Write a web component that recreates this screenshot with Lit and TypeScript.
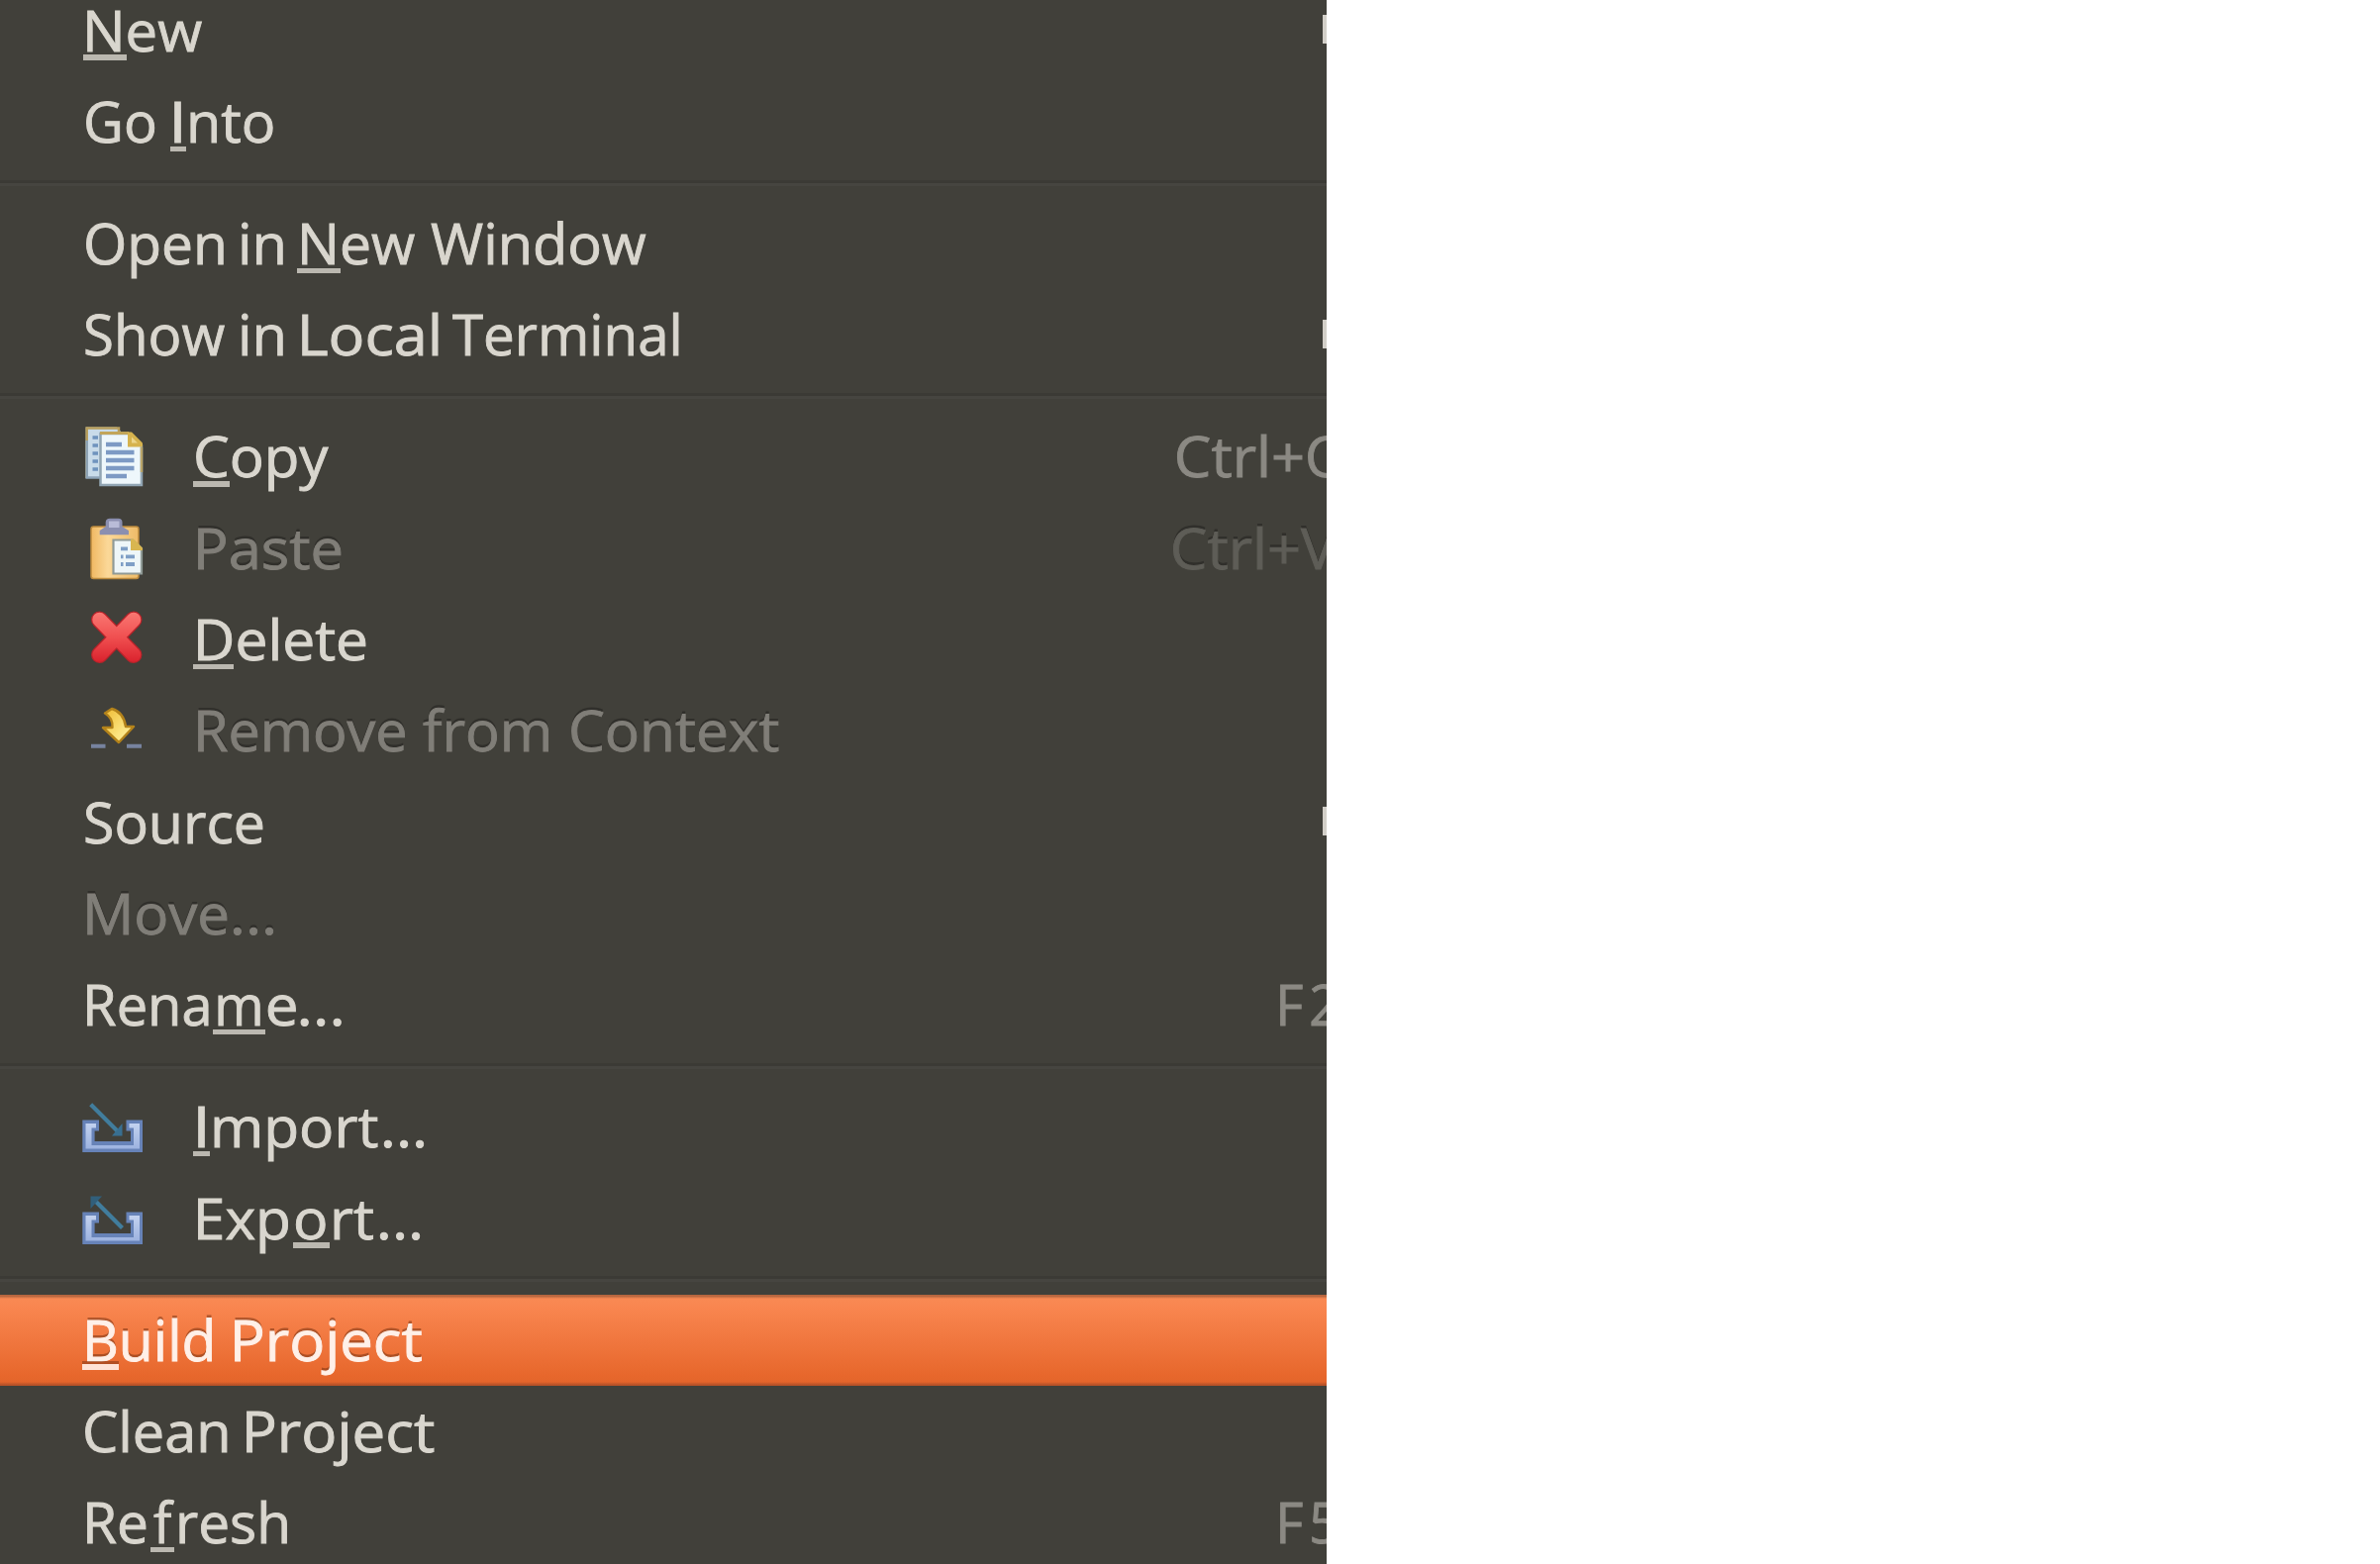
import { LitElement, html, css, svg, nothing, TemplateResult } from "lit";
import { customElement, property } from "lit/decorators.js";
import { styleMap } from "lit/directives/style-map.js";

/** A run of text with the left and right edges of its ink, in menu pixels. */
type Run = [text: string, left: number, right: number];

interface Item {
  label: Run[];
  mnemonic?: [number, number];
  icon?: string;
  accel?: Run[];
  submenu?: boolean;
  disabled?: boolean;
  active?: boolean;
}

const FONT = '"Open Sans", "Noto Sans", sans-serif';
const FONT_SIZE = 57;

const GROUPS: Item[][] = [
  [
    { label: [["New", 87.5, 203.5]], mnemonic: [83.5, 128], submenu: true },
    { label: [["Go ", 86.5, 156], ["I", 176, 183], ["nto", 192, 276]], mnemonic: [172, 188] },
  ],
  [
    {
      label: [["Open ", 86.5, 225.5], ["in ", 244, 286], ["New ", 304.5, 418.5], ["Window", 434.5, 652]],
      mnemonic: [300, 344],
    },
    {
      label: [["Show ", 86, 227], ["in ", 244, 286], ["Local ", 304.5, 442], ["Terminal", 457, 685.5]],
      submenu: true,
    },
  ],
  [
    { label: [["Copy", 198, 332]], mnemonic: [195, 232], icon: "copy", accel: [["Ctrl+", 1188.5, 1315], ["C", 1321, 1353]] },
    { label: [["Paste", 200, 345]], icon: "paste", disabled: true, accel: [["Ctrl+", 1184.5, 1311], ["V", 1314, 1349]] },
    { label: [["Delete", 200, 370]], mnemonic: [195, 236], icon: "delete" },
    { label: [["Remove ", 200, 409.5], ["from ", 427, 554.5], ["Context", 576.5, 786.5]], icon: "remove", disabled: true },
    { label: [["Source", 86, 266]], submenu: true },
    { label: [["Move", 88, 230], ["...", 235.5, 275.5]], disabled: true },
    { label: [["Rena", 88, 211], ["m", 220, 263], ["e", 270.5, 299], ["...", 303.5, 344]], mnemonic: [215, 268], accel: [["F", 1293, 1316], ["2", 1324, 1350]] },
  ],
  [
    { label: [["I", 200, 207], ["mport", 216, 382], ["...", 388, 428]], mnemonic: [195, 212], icon: "import" },
    { label: [["Exp", 200, 291], ["o", 298.5, 328.5], ["rt", 337, 377.5], ["...", 384, 424]], mnemonic: [295.5, 332.5], icon: "export" },
  ],
  [
    { label: [["Build ", 88, 213.5], ["Project", 236.5, 426]], mnemonic: [83, 120], active: true },
    { label: [["Clean ", 86, 229.5], ["Project", 248.5, 438.5]] },
    { label: [["Re", 88, 148], ["f", 154.5, 175.5], ["resh", 181, 290]], mnemonic: [151.5, 176], accel: [["F", 1293, 1316], ["5", 1325, 1350]] },
  ],
];

const TRAY = svg`
  <path d="M3.3 39.4H20V50.5H15.6V61H52V50.5H47.5V39.4H64V72H3.3Z" fill="#6783b8"/>
  <path d="M6.5 43H17V47.500H12.500V65H55V47.500H50.500V43H61V68.500H6.500Z" fill="url(#tray)"/>`;

const ICONS: Record<string, TemplateResult> = {
  copy: svg`
    <path d="M6.7 16.500H38L42 21V68H6.7Z" fill="#c9dbe9"/>
    <path d="M7.7 68V17.500H40V22" fill="none" stroke="#b79e5c" stroke-width="2.500"/>
    <path d="M7.700 30V67.500H21" fill="none" stroke="#8ea4b8" stroke-width="2.500"/>
    <path d="M13.500 27H19M13.500 35H19M13.500 43H19M13.500 51H19M13.500 59H19" stroke="#6f93bd" stroke-width="3.500"/>
    <path d="M21.500 23H51L63 35V75H21.500Z" fill="#eef7fb" stroke="#91a5b3" stroke-width="2.500"/>
    <path d="M21 22.500H50" stroke="#c2a559" stroke-width="3"/>
    <path d="M63 37V62" stroke="#b9a569" stroke-width="2.500"/>
    <path d="M49 21.500H53L64 32.500V36.500H49Z" fill="#d6b34e"/>
    <path d="M53 26.500V32.500H59Z" fill="#ecd68c"/>
    <path d="M27 34H43M27 42H55.500M27 50H55.500M27 58H55.500M27 66H48" stroke="#7d9ac4" stroke-width="4.500"/>`,
  paste: svg`
    <rect x="12" y="24" width="48" height="52.500" rx="2.500" fill="url(#board)" stroke="#bd8b3e" stroke-width="1.500"/>
    <path d="M26.700 19.500Q27 15.800 31 15.800H39.500Q43.300 15.800 43.500 19.500V24L50 28V32.300H20.700V28L26.700 24Z" fill="#8b8fb0"/>
    <path d="M30 18.500H40.500V25H30Z" fill="#b9bcd8"/>
    <path d="M34.500 37.500H54L63 46V71.500H34.500Z" fill="#eef6f8" stroke="#8f9a96" stroke-width="2.200"/>
    <path d="M52 36.500H55L64 45.500V48H52Z" fill="#d9b650"/>
    <path d="M42 46.300H49M42 54.300H44.500M47 54.300H56M42 62H44.500M47 62H56" stroke="#7f9fc6" stroke-width="3.800"/>`,
  delete: svg`
    <path d="M20.500 26L55 61.500M55 26L20.500 61.500" fill="none" stroke="#b8232a" stroke-width="17" stroke-linecap="round"/>
    <path d="M20.500 26L55 61.500M55 26L20.500 61.500" fill="none" stroke="url(#cross)" stroke-width="14.500" stroke-linecap="round"/>`,
  remove: svg`
    <path d="M12 61.700H26.500M48 61.700H63" stroke="#77839f" stroke-width="4"/>
    <path d="M26 28.500L33 24C40 26 45.500 32.500 47 42H55L40 58L24 43H33.500C34 36.500 31 31.500 26 28.500Z" fill="url(#gold)" stroke="#b4831a" stroke-width="2.500" stroke-linejoin="round"/>`,
  import: svg`${TRAY}
    <path d="M11.700 23.700L40 52" stroke="#417d9d" stroke-width="4.200"/>
    <path d="M43.500 43V55.500H33Z" fill="#386f91"/>`,
  export: svg`${TRAY}
    <path d="M17 29L43.500 55.400" stroke="#417d9d" stroke-width="4.200"/>
    <path d="M11.500 36V23.500H23Z" fill="#315f7b"/>`,
};

const context = document.createElement("canvas").getContext("2d")!;

/** Ink extent of a text in its natural shape. */
function inkOf(text: string) {
  context.font = `400 ${FONT_SIZE}px ${FONT}`;
  const m = context.measureText(text);
  return { start: -m.actualBoundingBoxLeft, width: m.actualBoundingBoxRight + m.actualBoundingBoxLeft };
}

@customElement("fitted-text")
class FittedText extends LitElement {
  @property({ attribute: false }) runs: Run[] = [];

  static styles = css`
    :host { display: flex; white-space: pre; }
    .gap, .slot { display: block; flex: none; }
    .gap { overflow: hidden; }
    .run { display: inline-block; transform-origin: 0 50%; }
  `;

  render() {
    let cursor = 0;
    let space = "";
    return this.runs.map(([raw, left, right]) => {
      const text = raw.trimEnd();
      const ink = inkOf(text);
      const scale = (right - left) / ink.width;
      const gap = html`<span class="gap" style=${styleMap({ width: `${left - cursor}px` })}>${space}</span>`;
      cursor = right;
      space = raw.slice(text.length);
      return html`${gap}<span class="slot" style=${styleMap({ width: `${right - left}px` })}
        ><span class="run" style=${styleMap({ transform: `scaleX(${scale}) translateX(${-ink.start}px)` })}>${text}</span></span>`;
    });
  }
}

@customElement("menu-item")
class MenuItem extends LitElement {
  @property({ attribute: false }) item!: Item;

  static styles = css`
    :host { display: block; flex: none; height: 92.31px; }
    .row {
      position: relative; display: grid; grid-template-columns: 80px 66px 1fr;
      height: 100%; color: #d9d6ce; -webkit-text-stroke: 0.9px currentColor;
    }
    .icon { grid-area: 1 / 2; width: 66px; height: 92.31px; display: block; }
    .label, .accel { grid-area: 1 / 1 / 2 / 4; line-height: 91px; }
    .accel { color: #8b8983; }
    .mnemonic { position: absolute; top: 70.5px; height: 5.6px; background: #bbb8b0; }
    .arrow { grid-area: 1 / 3; justify-self: end; align-self: start; width: 4px; height: 29px; margin-top: 30.5px; background: #d2cfc8; }
    .disabled { color: #807e78; text-shadow: 0 -3px 0 #302f2b; }
    .disabled .accel { color: #5e5d57; }
    .active {
      color: #fff0e8; text-shadow: 0 -3px 0 rgba(110, 45, 15, 0.5);
      background: linear-gradient(#b9673f 0, #b9673f 1.5px, #f98953 4px, #f98650 12px, #e7672c 82px, #e4652b 88px, #b65228 91px);
    }
    .active .mnemonic { background: #ffe3d6; box-shadow: 0 -3px 0 rgba(110, 45, 15, 0.45); }
  `;

  render() {
    const { label, mnemonic, icon, accel, submenu, disabled, active } = this.item;
    return html`<div class="row ${disabled ? "disabled" : ""} ${active ? "active" : ""}">
      ${icon
        ? html`<svg class="icon" viewBox="0 0 66 92.31">
            <defs>
              <linearGradient id="tray" x2="0" y2="1"><stop stop-color="#c3d2ef"/><stop offset="1" stop-color="#9db3e0"/></linearGradient>
              <linearGradient id="board"><stop stop-color="#f0b862"/><stop offset=".35" stop-color="#fbd898"/><stop offset="1" stop-color="#eebb68"/></linearGradient>
              <linearGradient id="cross" gradientUnits="userSpaceOnUse" x1="0" y1="17" x2="0" y2="71"><stop stop-color="#fa7a74"/><stop offset=".5" stop-color="#f04f50"/><stop offset="1" stop-color="#d81e2a"/></linearGradient>
              <linearGradient id="gold" x2="1" y2="1"><stop stop-color="#efb92f"/><stop offset=".6" stop-color="#fbe27c"/><stop offset="1" stop-color="#fff3ae"/></linearGradient>
            </defs>
            ${ICONS[icon]}
          </svg>`
        : nothing}
      <fitted-text class="label" .runs=${label}></fitted-text>
      ${mnemonic
        ? html`<span class="mnemonic" style=${styleMap({ left: `${mnemonic[0]}px`, width: `${mnemonic[1] - mnemonic[0]}px` })}></span>`
        : nothing}
      ${accel ? html`<fitted-text class="accel" .runs=${accel}></fitted-text>` : nothing}
      ${submenu ? html`<span class="arrow"></span>` : nothing}
    </div>`;
  }
}

@customElement("app-root")
class AppRoot extends LitElement {
  static styles = css`
    :host { display: block; height: 1580px; background: #fff; overflow: hidden; }
    .menu {
      display: flex; flex-direction: column; width: 1340px; height: 1580px; overflow: hidden;
      background: #41403a; font: 400 57px "Open Sans", "Noto Sans", sans-serif;
    }
    .menu > :first-child { margin-top: -15.3px; }
    .separator { flex: none; height: 30.77px; display: flex; flex-direction: column; justify-content: center; }
    .line { height: 3px; border-top: 3px solid #3b3a35; background: #464540; }
  `;

  render() {
    return html`<div class="menu">
      ${GROUPS.map((group, i) => html`${i ? html`<div class="separator"><div class="line"></div></div>` : nothing}${group.map(
        (item) => html`<menu-item .item=${item}></menu-item>`
      )}`)}
    </div>`;
  }
}
